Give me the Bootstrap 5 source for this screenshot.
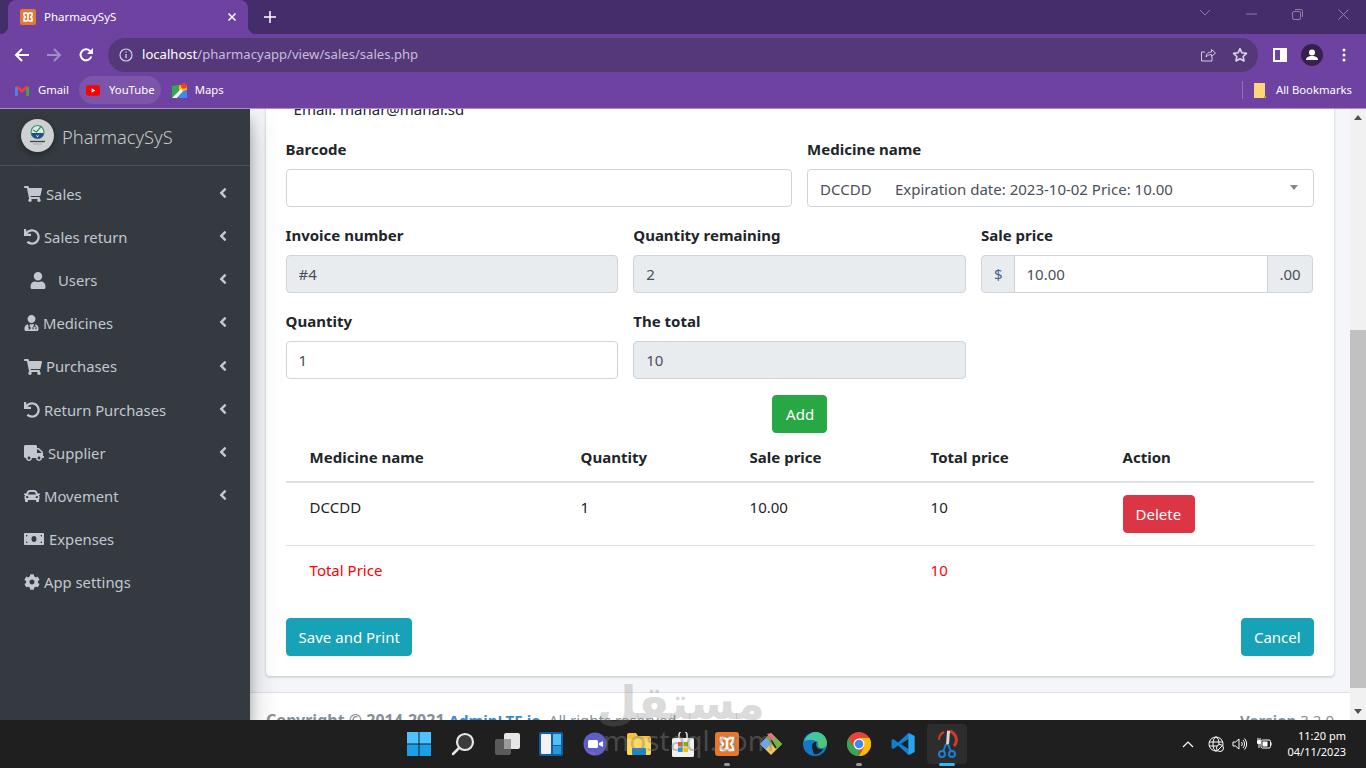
<!DOCTYPE html>
<html lang="en">
<head>
  <meta charset="UTF-8">
  <title>PharmacySyS</title>
  <link href="https://cdn.jsdelivr.net/npm/bootstrap@5.3.3/dist/css/bootstrap.min.css" rel="stylesheet">
  <style>
    html, body { height: 100%; overflow: hidden; }
    body { font-family: "Noto Sans", "Liberation Sans", sans-serif; font-size: 15px; color: #212529; }
    .screen { height: 768px; width: 1366px; }

    /* browser chrome */
    .tabstrip { height: 34px; background: #452c6a; }
    .tabitem { position: relative; width: 240px; margin-left: 8px; background: #6e42a0; border-radius: 8px 8px 0 0; color: #fff; font-size: 11.5px; padding: 0 11px 0 12px; }
    .tabitem::before, .tabitem::after { content: ""; position: absolute; bottom: 0; width: 8px; height: 8px; }
    .tabitem::before { left: -8px; background: radial-gradient(circle at 0 0, transparent 8px, #6e42a0 8.5px); }
    .tabitem::after { right: -8px; background: radial-gradient(circle at 100% 0, transparent 8px, #6e42a0 8.5px); }
    .newtab { width: 22px; margin-left: 11px; }
    .wingroup { padding-bottom: 6px; }
    .winctl { width: 46px; }
    .toolrow { height: 38px; background: #6e42a0; padding-top: 4px; }
    .toolbtn { width: 32px; }
    .firstbtn { margin-left: 6px; }
    .omnibox { width: 1150px; height: 34px; margin-left: 6px; margin-right: 6px; background: #54387a; border-radius: 17px; font-size: 13.1px; color: #c9bcdb; padding: 0 10px 0 11px; }
    .omnibox b { font-weight: 400; color: #fff; }
    .infoicon { margin-right: 9px; }
    .staricon { margin-left: 16px; }
    .markrow { height: 37px; background: #6e42a0; border-bottom: 1px solid #a88dca; color: #fff; font-size: 11.3px; padding: 0 14px 0 15px; }
    .markitem { height: 28px; }
    .markpill { background: #7c55ab; border-radius: 14px; padding: 0 6px 0 7px; margin: 0 11px 0 10px; }
    .markicon { margin-right: 9px; }
    .mapicon { margin-right: 8px; }
    .markdivider { width: 1px; height: 18px; background: #9070b8; margin-right: 11px; }
    .foldericon { margin-right: 10px; }

    /* admin page */
    .pagearea { height: 611px; overflow: hidden; }
    .sidepanel { width: 250px; background: #343a40; color: #c2c7d0; box-shadow: 0 14px 28px rgba(0,0,0,.25), 0 10px 10px rgba(0,0,0,.22); z-index: 2; }
    .brandrow { height: 57px; border-bottom: 1px solid #4b545c; padding-left: 21px; font-size: 18.3px; font-weight: 300; color: rgba(255,255,255,.72); }
    .brandlogo { margin: -3px 8px 0 0; filter: drop-shadow(0 2px 3px rgba(0,0,0,.35)); }
    .menulist { padding-top: 6.2px; }
    .menuitem { height: 43.2px; padding: 0 23px 0 24px; color: #c2c7d0; font-size: 14.8px; text-decoration: none; }
    .menuitem svg { fill: #c2c7d0; height: 16px; flex: none; margin-right: 4px; }
    .menuitem .arrowicon { margin: -2px 0 0 auto; height: 16px; width: 8px; }
    .menuitem .usericon { margin: 0 12px 0 6px; height: 17px; }
    .menuitem .moneyicon { margin-right: 5px; }
    .contentcol { width: 1100px; background: #f4f6f9; }
    .contentinner { margin-top: -31px; padding: 0 16.4px 16px 15.6px; }
    .formcard { border: 0; border-radius: 4px; box-shadow: 0 0 1px rgba(0,0,0,.125), 0 1px 3px rgba(0,0,0,.2); }
    .formcard .card-body { padding: 20px; }
    .emailline { line-height: 24px; padding-left: 8px; margin-top: -1px; margin-bottom: 16px; font-size: 15px; }
    .formcard .row { --bs-gutter-x: 15px; }
    .fieldbox { margin-bottom: 16px; }
    .fieldbox label { font-weight: 700; margin-bottom: 8px; line-height: 24px; display: block; font-size: 15px; }
    .formcard .form-control, .formcard .form-select, .formcard .input-group-text { border-color: #ced4da; color: #495057; font-size: 15px; line-height: 24px; border-radius: 4px; }
    .formcard .form-control[readonly] { background: #e9ecef; }
    .pricegroup { width: calc(100% - 1px); }
    .formcard .pricegroup > .form-control { border-radius: 0; background: #fff; }
    .formcard .pricegroup > .input-group-text { background: #e9ecef; }
    .formcard .pricegroup > .input-group-text:first-child { border-radius: 4px 0 0 4px; padding: 6px 11px 6px 12px; color: #4a6394; }
    .formcard .pricegroup > .input-group-text:last-child { border-radius: 0 4px 4px 0; padding: 6px 11px; }
    .selectwrap { position: relative; }
    .selectwrap .form-select { background-image: none; padding: 7px 30px 5px 12px; }
    .selectwrap::after { content: ""; position: absolute; right: 16px; top: 16px; border-style: solid; border-width: 5px 4px 0 4px; border-color: #888 transparent transparent transparent; }
    .actionbtn { font-size: 15px; line-height: 24px; padding: 6px 12px; border-radius: 4px; color: #fff; border: 1px solid; }
    .btngreen { background: #28a745; border-color: #28a745; padding-left: 13px; }
    .btnred { background: #dc3545; border-color: #dc3545; padding-right: 13px; }
    .btnteal { background: #17a2b8; border-color: #17a2b8; }
    .savebtn { padding-right: 11px; }
    .medtable { table-layout: fixed; margin-bottom: 24px; font-size: 15px; }
    .medtable th, .medtable td { padding: 12px 24px; line-height: 24px; vertical-align: top; }
    .medtable thead th { border-bottom: 2px solid #dee2e6; }
    .medtable tbody td { border-bottom: 1px solid #dee2e6; }
    .medtable tbody tr:last-child td { border-bottom: 0; color: #f00; }
    .colname { width: 271px; } .colqty { width: 169px; } .colsale { width: 181px; } .coltotal { width: 192px; }
    .pagefooter { height: 60px; background: #fff; border-top: 1px solid #dee2e6; padding: 15px 16px; color: #869099; font-size: 15px; line-height: 24px; }
    .pagefooter b { font-weight: 700; }
    .pagefooter .copyspan { font-size: 16px; }
    .pagefooter a { color: #3a8ad0; font-weight: 700; text-decoration: none; }
    .scrolltrack { width: 16px; background: #f1f1f1; }
    .scrollarrow { height: 17px; }
    .scrollgap { height: 204px; }
    .scrollthumb { height: 358px; background: #c1c1c1; }

    /* taskbar */
    .taskbar { height: 48px; background: #1f1f1f; color: #fff; position: relative; z-index: 3; }
    .taskicons { position: absolute; left: 397px; top: 0; height: 48px; }
    .taskslot { position: relative; width: 44px; height: 48px; }
    .taskslot.activeslot::before { content: ""; position: absolute; left: 2px; top: 4px; width: 40px; height: 40px; background: #2d2d2d; border-radius: 4px; }
    .taskslot svg { position: relative; }
    .taskslot .rundot { position: absolute; bottom: 2px; left: 19px; width: 6px; height: 3px; border-radius: 2px; background: #9a9a9a; }
    .taskslot .rundot.bluedot { left: 14px; width: 16px; background: #3cb6f4; }
    .trayzone { font-size: 11px; padding-right: 20px; }
    .trayicon { margin-right: 8px; }
    .traycaret { margin-right: 14px; }
    .trayclock { text-align: right; line-height: 16px; margin-left: 15px; }
    .watermark { position: absolute; left: 603px; top: 672px; width: 162px; text-align: center; color: rgba(128,128,128,.3); z-index: 4; pointer-events: none; }
    .watermark .wmarabic { font-family: "DejaVu Sans", sans-serif; font-weight: 700; font-size: 46px; line-height: 62px; }
    .watermark .wmlatin { font-family: "Noto Sans", sans-serif; font-size: 28px; line-height: 28px; margin-top: -8px; color: rgba(128,128,128,.45); }
  </style>
</head>
<body>
  <svg width="0" height="0" class="position-absolute">
    <symbol id="ic-cart" viewBox="0 0 576 512"><path d="M528.12 301.319l47.273-208C578.806 78.301 567.391 64 551.99 64H159.208l-9.166-44.81C147.758 8.021 137.93 0 126.529 0H24C10.745 0 0 10.745 0 24v16c0 13.255 10.745 24 24 24h69.883l70.248 343.435C147.325 417.1 136 435.222 136 456c0 30.928 25.072 56 56 56s56-25.072 56-56c0-15.674-6.447-29.835-16.824-40h209.647C430.447 426.165 424 440.326 424 456c0 30.928 25.072 56 56 56s56-25.072 56-56c0-22.172-12.888-41.332-31.579-50.405l5.517-24.276c3.413-15.018-8.002-29.319-23.403-29.319H218.117l-6.545-32h293.145c11.206 0 20.92-7.754 23.403-18.681z"/></symbol>
    <symbol id="ic-undo" viewBox="0 0 512 512"><path d="M212.333 224.333H12c-6.627 0-12-5.373-12-12V12C0 5.373 5.373 0 12 0h48c6.627 0 12 5.373 12 12v78.112C117.773 39.279 184.26 7.47 258.175 8.007c136.906.994 246.448 111.623 246.157 248.532C504.041 393.258 393.12 504 256.333 504c-64.089 0-122.496-24.313-166.51-64.215-5.099-4.622-5.334-12.554-.467-17.42l33.967-33.967c4.474-4.474 11.662-4.717 16.401-.525C170.76 415.336 211.58 432 256.333 432c97.268 0 176-78.716 176-176 0-97.267-78.716-176-176-176-58.496 0-110.28 28.476-142.274 72.333h98.274c6.627 0 12 5.373 12 12v48c0 6.627-5.373 12-12 12z"/></symbol>
    <symbol id="ic-user" viewBox="0 0 448 512"><path d="M224 256c70.7 0 128-57.3 128-128S294.7 0 224 0 96 57.3 96 128s57.3 128 128 128zm89.6 32h-16.7c-22.2 10.2-46.9 16-72.9 16s-50.6-5.8-72.9-16h-16.7C60.2 288 0 348.2 0 422.4V464c0 26.5 21.5 48 48 48h352c26.5 0 48-21.5 48-48v-41.6c0-74.2-60.2-134.4-134.4-134.4z"/></symbol>
    <symbol id="ic-doctor" viewBox="0 0 448 512"><path d="M224 256c70.7 0 128-57.3 128-128S294.7 0 224 0 96 57.3 96 128s57.3 128 128 128zM104 296C46 310 0 360 0 422v42c0 26 22 48 48 48h352c26 0 48-22 48-48v-42c0-62-46-112-104-126v60c24 8 40 28 40 52v36c0 8-6 14-14 14h-30v-28h16v-22c0-18-18-32-36-32s-36 14-36 32v22h16v28h-30c-8 0-14-6-14-14v-36c0-24 16-44 40-52v-64c-6-1-30 10-64 10s-58-11-64-10v80c20 6 32 22 32 42 0 26-22 48-48 48s-48-22-48-48c0-20 12-36 32-42zM120 400a22 22 0 1 0 .1 0z"/></symbol>
    <symbol id="ic-arrow" viewBox="0 0 256 512"><path d="M31.7 239l136-136c9.4-9.4 24.6-9.4 33.9 0l22.6 22.6c9.4 9.4 9.4 24.6 0 33.9L127.9 256l96.4 96.4c9.4 9.4 9.4 24.6 0 33.9L201.7 409c-9.4 9.4-24.6 9.4-33.9 0l-136-136c-9.5-9.4-9.5-24.6-.1-34z"/></symbol>
    <symbol id="ic-truck" viewBox="0 0 640 512"><path d="M624 352h-16V243.9c0-12.7-5.1-24.9-14.1-33.9L494 110.1c-9-9-21.2-14.1-33.9-14.1H416V48c0-26.5-21.5-48-48-48H48C21.5 0 0 21.5 0 48v320c0 26.5 21.5 48 48 48h16c0 53 43 96 96 96s96-43 96-96h128c0 53 43 96 96 96s96-43 96-96h48c8.8 0 16-7.2 16-16v-32c0-8.8-7.2-16-16-16zM160 464c-26.5 0-48-21.5-48-48s21.5-48 48-48 48 21.5 48 48-21.5 48-48 48zm320 0c-26.5 0-48-21.5-48-48s21.5-48 48-48 48 21.5 48 48-21.5 48-48 48zm80-208H416V144h44.1l99.9 99.9V256z"/></symbol>
    <symbol id="ic-car" viewBox="0 0 512 512"><path d="M499.99 176h-59.87l-16.64-41.6C406.38 91.63 365.57 64 319.5 64h-127c-46.06 0-86.88 27.63-103.99 70.4L71.87 176H12.01C4.2 176-1.53 183.34.37 190.91l6 24C7.7 220.25 12.5 224 18.01 224h20.07C24.65 235.73 16 252.78 16 272v48c0 16.12 6.16 30.67 16 41.93V416c0 17.67 14.33 32 32 32h32c17.67 0 32-14.33 32-32v-32h256v32c0 17.67 14.33 32 32 32h32c17.67 0 32-14.33 32-32v-54.07c9.84-11.25 16-25.8 16-41.93v-48c0-19.22-8.65-36.27-22.07-48H494c5.51 0 10.31-3.75 11.64-9.09l6-24c1.89-7.57-3.84-14.91-11.65-14.91zm-352.06-17.83c7.29-18.22 24.94-30.17 44.57-30.17h127c19.63 0 37.28 11.95 44.57 30.17L384 208H128l19.93-49.83zM96 319.8c-19.2 0-32-12.76-32-31.9S76.8 256 96 256s48 28.71 48 47.85-28.8 15.95-48 15.95zm320 0c-19.2 0-48 3.19-48-15.95S396.8 256 416 256s32 12.76 32 31.9-12.8 31.9-32 31.9z"/></symbol>
    <symbol id="ic-money" viewBox="0 0 640 512"><path fill-rule="evenodd" d="M32 64h576c18 0 32 14 32 32v320c0 18-14 32-32 32H32c-18 0-32-14-32-32V96c0-18 14-32 32-32zM64 128v48c35 0 48-20 48-48zm464 0c0 28 13 48 48 48v-48zM64 336v48h48c0-28-13-48-48-48zm512 0c-35 0-48 20-48 48h48zM320 160c-48 0-80 42-80 96s32 96 80 96 80-42 80-96-32-96-80-96z"/></symbol>
    <symbol id="ic-cog" viewBox="0 0 512 512"><path d="M487.4 315.7l-42.6-24.6c4.3-23.2 4.3-47 0-70.2l42.6-24.6c4.9-2.8 7.1-8.6 5.5-14-11.1-35.6-30-67.8-54.7-94.6-3.8-4.1-10-5.1-14.8-2.3L380.8 110c-17.9-15.4-38.5-27.3-60.8-35.1V25.8c0-5.6-3.9-10.5-9.4-11.7-36.7-8.2-74.3-7.8-109.2 0-5.5 1.2-9.4 6.1-9.4 11.7V75c-22.2 7.9-42.8 19.8-60.8 35.1L88.7 85.5c-4.9-2.8-11-1.9-14.8 2.3-24.7 26.7-43.6 58.9-54.7 94.6-1.7 5.4.6 11.2 5.5 14L67.3 221c-4.3 23.2-4.3 47 0 70.2l-42.6 24.6c-4.9 2.8-7.1 8.6-5.5 14 11.1 35.6 30 67.8 54.7 94.6 3.8 4.1 10 5.1 14.8 2.3l42.6-24.6c17.9 15.4 38.5 27.3 60.8 35.1v49.2c0 5.6 3.9 10.5 9.4 11.7 36.7 8.2 74.3 7.8 109.2 0 5.5-1.2 9.4-6.1 9.4-11.7v-49.2c22.2-7.9 42.8-19.8 60.8-35.1l42.6 24.6c4.9 2.8 11 1.9 14.8-2.3 24.7-26.7 43.6-58.9 54.7-94.6 1.5-5.5-.7-11.3-5.6-14.1zM256 336c-44.1 0-80-35.9-80-80s35.9-80 80-80 80 35.9 80 80-35.9 80-80 80z"/></symbol>
    <symbol id="ic-xampp" viewBox="0 0 24 24"><rect width="24" height="24" rx="3" fill="#e8772e"/><path d="M12 8L10 6H6V10L8 12L6 14V18H10L12 16L14 18H18V14L16 12L18 10V6H14ZV16" fill="none" stroke="#fff" stroke-width="2.600" stroke-linejoin="round"/></symbol>
  </svg>

  <div class="screen d-flex flex-column">
    <div class="tabstrip d-flex align-items-center">
      <div class="tabitem d-flex align-items-center h-100">
        <svg width="16" height="16" class="me-2"><use href="#ic-xampp"/></svg>
        <span>PharmacySyS</span>
        <svg width="10" height="10" viewBox="0 0 10 10" class="ms-auto"><path d="M1.500 1.500l7 7M8.500 1.500l-7 7" stroke="#fff" stroke-width="1.500"/></svg>
      </div>
      <div class="newtab d-flex justify-content-center">
        <svg width="12" height="12" viewBox="0 0 12 12"><path d="M6 0v12M0 6h12" stroke="#fff" stroke-width="1.500"/></svg>
      </div>
      <div class="ms-auto d-flex wingroup">
        <div class="winctl d-flex justify-content-center"><svg width="12" height="8" viewBox="0 0 12 8"><path d="M1 1l5 5 5-5" fill="none" stroke="#8d7ea8"/></svg></div>
        <div class="winctl d-flex justify-content-center align-items-center"><svg width="11" height="2"><path d="M0 1h11" stroke="#8d7ea8"/></svg></div>
        <div class="winctl d-flex justify-content-center"><svg width="11" height="11" viewBox="0 0 11 11"><rect x=".5" y="2.500" width="8" height="8" rx="1.500" fill="none" stroke="#8d7ea8"/><path d="M3 .5h6a1.500 1.500 0 0 1 1.500 1.500v6" fill="none" stroke="#8d7ea8"/></svg></div>
        <div class="winctl d-flex justify-content-center"><svg width="11" height="11" viewBox="0 0 11 11"><path d="M.5.5l10 10M10.500.5l-10 10" stroke="#8d7ea8"/></svg></div>
      </div>
    </div>

    <div class="toolrow d-flex align-items-center">
      <div class="toolbtn firstbtn d-flex justify-content-center"><svg width="16" height="16" viewBox="0 0 16 16"><path d="M15 8H2M8 2L2 8l6 6" fill="none" stroke="#fff" stroke-width="2"/></svg></div>
      <div class="toolbtn d-flex justify-content-center"><svg width="16" height="16" viewBox="0 0 16 16"><path d="M1 8h13M8 2l6 6-6 6" fill="none" stroke="#a48dc4" stroke-width="2"/></svg></div>
      <div class="toolbtn d-flex justify-content-center"><svg width="16" height="16" viewBox="0 0 16 16"><path d="M13.300 9.500A5.500 5.500 0 1 1 12 4L14 6" fill="none" stroke="#fff" stroke-width="2"/><path d="M15 1v6H9z" fill="#fff"/></svg></div>
      <div class="omnibox d-flex align-items-center">
        <svg width="14" height="14" viewBox="0 0 14 14" class="infoicon"><circle cx="7" cy="7" r="6" fill="none" stroke="#d9d0e6" stroke-width="1.200"/><path d="M7 6v4.200M7 3.500v1.300" stroke="#d9d0e6" stroke-width="1.300"/></svg>
        <span><b>localhost</b>/pharmacyapp/view/sales/sales.php</span>
        <svg width="16" height="16" viewBox="0 0 16 16" class="ms-auto"><path d="M12 9.500V14H1.500V5H5M6 10c0-3 2-5 5.500-5V2.500L15.500 6l-4 3.500V7.500C9 7.500 7.500 8.500 6 10z" fill="none" stroke="#d3c9e0" stroke-width="1"/></svg>
        <svg width="16" height="16" viewBox="0 0 24 24" class="staricon"><path d="M12 2.500l2.900 6.200 6.800.800-5 4.700 1.300 6.700-6-3.300-6 3.300 1.300-6.700-5-4.700 6.800-.8z" fill="none" stroke="#ddd5e8" stroke-width="2.400" stroke-linejoin="round"/></svg>
      </div>
      <div class="toolbtn d-flex justify-content-center"><svg width="14" height="14" viewBox="0 0 14 14"><rect x="1" y="1" width="12" height="12" fill="none" stroke="#fff" stroke-width="2"/><rect x="7" y="1" width="6" height="12" fill="#fff"/></svg></div>
      <div class="toolbtn d-flex justify-content-center"><svg width="22" height="22" viewBox="0 0 22 22"><circle cx="11" cy="11" r="11" fill="#35204f"/><circle cx="11" cy="8.500" r="3" fill="#fff"/><path d="M5 16c0-3 3-4 6-4s6 1 6 4z" fill="#fff"/></svg></div>
      <div class="toolbtn d-flex justify-content-center"><svg width="4" height="14" viewBox="0 0 4 14"><circle cx="2" cy="2" r="1.500" fill="#fff"/><circle cx="2" cy="7" r="1.500" fill="#fff"/><circle cx="2" cy="12" r="1.500" fill="#fff"/></svg></div>
    </div>

    <div class="markrow d-flex align-items-center">
      <div class="markitem d-flex align-items-center">
        <svg width="14" height="11" viewBox="0 0 15 11" class="markicon"><path d="M0 1.500V11h3V4.500l4.500 3.300L12 4.500V11h3V1.500L12.500.5 7.500 4.200 2.500.5z" fill="#ea4335"/><path d="M0 1.500V11h3V3.500z" fill="#4285f4"/><path d="M12 3.500V11h3V1.500z" fill="#34a853"/></svg>
        <span>Gmail</span>
      </div>
      <div class="markitem markpill d-flex align-items-center">
        <svg width="14" height="11" viewBox="0 0 15 11" class="markicon"><rect width="15" height="11" rx="2.500" fill="#f00"/><path d="M6 3l4 2.500L6 8z" fill="#fff"/></svg>
        <span>YouTube</span>
      </div>
      <div class="markitem d-flex align-items-center">
        <svg width="15" height="15" viewBox="0 0 15 15" class="mapicon"><path d="M0 3l7-1v12l-7 1z" fill="#34a853"/><path d="M7 2l8 1v4L7 10z" fill="#fbbc04"/><path d="M7 10l8-3v8H7z" fill="#4285f4"/><path d="M0 15L9 6l2 2-6 7z" fill="#f4f4f4"/><circle cx="12" cy="3" r="2.800" fill="#ea4335"/></svg>
        <span>Maps</span>
      </div>
      <div class="markdivider ms-auto"></div>
      <div class="markitem d-flex align-items-center">
        <svg width="12" height="15" viewBox="0 0 12 15" class="foldericon"><path d="M0 0h11v13l1 2H0z" fill="#fcd479"/><path d="M10 13h2v2h-2z" fill="#d99d2b"/></svg>
        <span>All Bookmarks</span>
      </div>
    </div>

    <div class="pagearea d-flex">
      <aside class="sidepanel flex-shrink-0">
        <div class="brandrow d-flex align-items-center">
          <svg width="33" height="33" viewBox="0 0 33 33" class="brandlogo"><circle cx="16.500" cy="16.500" r="16.500" fill="#cfd0d1"/><circle cx="16.500" cy="13" r="6.500" fill="#e4e6e6" stroke="#2f9a6a" stroke-width="1.200"/><path d="M10.500 14h12c0 3.500-2.500 5.500-6 5.500s-6-2-6-5.500z" fill="#1f4f8e"/><path d="M12 11l3.500 2 5-6" fill="none" stroke="#2f9a55" stroke-width="1.300"/><path d="M14.500 15.500l2 1.500 2-1.500-2 3z" fill="#e4e6e6"/><path d="M9 22.500h15" stroke="#444" stroke-width="1.300"/><path d="M12 25h9" stroke="#999" stroke-width=".7"/></svg>
          <span>PharmacySyS</span>
        </div>
        <ul class="nav flex-column menulist">
          <li class="nav-item"><a class="menuitem d-flex align-items-center" href="#"><svg width="18"><use href="#ic-cart"/></svg>Sales<svg class="arrowicon"><use href="#ic-arrow"/></svg></a></li>
          <li class="nav-item"><a class="menuitem d-flex align-items-center" href="#"><svg width="16"><use href="#ic-undo"/></svg>Sales return<svg class="arrowicon"><use href="#ic-arrow"/></svg></a></li>
          <li class="nav-item"><a class="menuitem d-flex align-items-center" href="#"><svg width="16" class="usericon"><use href="#ic-user"/></svg>Users<svg class="arrowicon"><use href="#ic-arrow"/></svg></a></li>
          <li class="nav-item"><a class="menuitem d-flex align-items-center" href="#"><svg width="15"><use href="#ic-doctor"/></svg>Medicines<svg class="arrowicon"><use href="#ic-arrow"/></svg></a></li>
          <li class="nav-item"><a class="menuitem d-flex align-items-center" href="#"><svg width="18"><use href="#ic-cart"/></svg>Purchases<svg class="arrowicon"><use href="#ic-arrow"/></svg></a></li>
          <li class="nav-item"><a class="menuitem d-flex align-items-center" href="#"><svg width="16"><use href="#ic-undo"/></svg>Return Purchases<svg class="arrowicon"><use href="#ic-arrow"/></svg></a></li>
          <li class="nav-item"><a class="menuitem d-flex align-items-center" href="#"><svg width="20"><use href="#ic-truck"/></svg>Supplier<svg class="arrowicon"><use href="#ic-arrow"/></svg></a></li>
          <li class="nav-item"><a class="menuitem d-flex align-items-center" href="#"><svg width="16"><use href="#ic-car"/></svg>Movement<svg class="arrowicon"><use href="#ic-arrow"/></svg></a></li>
          <li class="nav-item"><a class="menuitem d-flex align-items-center" href="#"><svg width="20" class="moneyicon"><use href="#ic-money"/></svg>Expenses</a></li>
          <li class="nav-item"><a class="menuitem d-flex align-items-center" href="#"><svg width="16"><use href="#ic-cog"/></svg>App settings</a></li>
        </ul>
      </aside>

      <div class="contentcol flex-shrink-0">
        <div class="contentinner">
          <div class="card formcard">
            <div class="card-body">
              <div class="emailline">Email: manar@manar.sd</div>
              <div class="row">
                <div class="col-6 fieldbox">
                  <label>Barcode</label>
                  <input type="text" class="form-control">
                </div>
                <div class="col-6 fieldbox">
                  <label>Medicine name</label>
                  <div class="selectwrap">
                    <select class="form-select"><option>DCCDD&nbsp;&nbsp;&nbsp;&nbsp;&nbsp;&nbsp;Expiration date: 2023-10-02 Price: 10.00</option></select>
                  </div>
                </div>
              </div>
              <div class="row">
                <div class="col-4 fieldbox">
                  <label>Invoice number</label>
                  <input type="text" class="form-control" value="#4" readonly>
                </div>
                <div class="col-4 fieldbox">
                  <label>Quantity remaining</label>
                  <input type="text" class="form-control" value="2" readonly>
                </div>
                <div class="col-4 fieldbox">
                  <label>Sale price</label>
                  <div class="input-group pricegroup">
                    <span class="input-group-text">$</span>
                    <input type="text" class="form-control" value="10.00">
                    <span class="input-group-text">.00</span>
                  </div>
                </div>
              </div>
              <div class="row">
                <div class="col-4 fieldbox">
                  <label>Quantity</label>
                  <input type="text" class="form-control" value="1">
                </div>
                <div class="col-4 fieldbox">
                  <label>The total</label>
                  <input type="text" class="form-control" value="10" readonly>
                </div>
              </div>
              <div class="text-center">
                <button class="actionbtn btngreen">Add</button>
              </div>
              <table class="table medtable">
                <colgroup><col class="colname"><col class="colqty"><col class="colsale"><col class="coltotal"><col></colgroup>
                <thead>
                  <tr><th>Medicine name</th><th>Quantity</th><th>Sale price</th><th>Total price</th><th>Action</th></tr>
                </thead>
                <tbody>
                  <tr><td>DCCDD</td><td>1</td><td>10.00</td><td>10</td><td><button class="actionbtn btnred">Delete</button></td></tr>
                  <tr><td>Total Price</td><td></td><td></td><td>10</td><td></td></tr>
                </tbody>
              </table>
              <div class="d-flex justify-content-between">
                <button class="actionbtn btnteal savebtn">Save and Print</button>
                <button class="actionbtn btnteal">Cancel</button>
              </div>
            </div>
          </div>
        </div>
        <footer class="pagefooter d-flex justify-content-between">
          <div><b class="copyspan">Copyright © 2014-2021 </b><b><a href="#">AdminLTE.io</a>.</b> All rights reserved.</div>
          <div><b>Version</b> 3.2.0</div>
        </footer>
      </div>

      <div class="scrolltrack d-flex flex-column flex-shrink-0">
        <div class="scrollarrow d-flex align-items-center justify-content-center"><svg width="8" height="5" viewBox="0 0 8 5"><path d="M4 0l4 5H0z" fill="#505050"/></svg></div>
        <div class="scrollgap"></div>
        <div class="scrollthumb"></div>
        <div class="flex-grow-1"></div>
        <div class="scrollarrow d-flex align-items-center justify-content-center"><svg width="8" height="5" viewBox="0 0 8 5"><path d="M4 5l4-5H0z" fill="#505050"/></svg></div>
      </div>
    </div>

    <div class="taskbar d-flex align-items-center">
      <div class="taskicons d-flex">
        <div class="taskslot d-flex align-items-center justify-content-center"><svg width="24" height="24" viewBox="0 0 24 24"><rect width="11.500" height="11.500" fill="#4cc2ff"/><rect x="12.500" width="11.500" height="11.500" fill="#4cc2ff"/><rect y="12.500" width="11.500" height="11.500" fill="#1a9fe8"/><rect x="12.500" y="12.500" width="11.500" height="11.500" fill="#1a9fe8"/></svg></div>
        <div class="taskslot d-flex align-items-center justify-content-center"><svg width="24" height="24" viewBox="0 0 24 24"><circle cx="14" cy="10" r="8" fill="#3c3c3c" stroke="#e8e8e8" stroke-width="2.200"/><path d="M8 16l-6 6" stroke="#e8e8e8" stroke-width="2.500" stroke-linecap="round"/></svg></div>
        <div class="taskslot d-flex align-items-center justify-content-center"><svg width="25" height="22" viewBox="0 0 25 22"><rect y="6" width="16" height="16" rx="2" fill="#5a5a5a"/><rect x="9" width="16" height="16" rx="2" fill="#e6e6e6"/><rect x="9" y="6" width="7" height="10" fill="#9a9a9a"/></svg></div>
        <div class="taskslot d-flex align-items-center justify-content-center"><svg width="24" height="24" viewBox="0 0 24 24"><rect width="24" height="24" rx="2" fill="#0f5fa8"/><rect x="2" y="2" width="10" height="20" rx="1" fill="#f2f2f2"/><rect x="14" y="2" width="8" height="11" fill="#54c0f0"/><rect x="14" y="14" width="8" height="8" fill="#2c96d8"/></svg></div>
        <div class="taskslot d-flex align-items-center justify-content-center"><svg width="24" height="24" viewBox="0 0 24 24"><circle cx="12" cy="12" r="11.500" fill="#5b5fc7"/><path d="M1 12A11 11 0 0 0 12 23v-3H6z" fill="#7b60c8"/><rect x="5" y="8" width="10" height="8" rx="1.500" fill="#fff"/><path d="M16 11l4-2v6l-4-2z" fill="#fff"/></svg></div>
        <div class="taskslot d-flex align-items-center justify-content-center"><svg width="24" height="22" viewBox="0 0 24 22"><path d="M0 2a2 2 0 0 1 2-2h7l2 3h11a2 2 0 0 1 2 2v15a2 2 0 0 1-2 2H2a2 2 0 0 1-2-2z" fill="#f5c33b"/><path d="M0 6h24v14a2 2 0 0 1-2 2H2a2 2 0 0 1-2-2z" fill="#fbd960"/><rect x="5" y="15" width="14" height="7" rx="1" fill="#1a82c8"/></svg></div>
        <div class="taskslot d-flex align-items-center justify-content-center"><svg width="22" height="25" viewBox="0 0 22 25"><path d="M7 6V3a4 4 0 0 1 8 0v3" fill="none" stroke="#e6e6e6" stroke-width="1.500"/><rect y="6" width="22" height="19" rx="1.500" fill="#f0f0f0"/><rect x="6" y="10" width="4.500" height="4.500" fill="#e8502f"/><rect x="11.500" y="10" width="4.500" height="4.500" fill="#7ab800"/><rect x="6" y="15.500" width="4.500" height="4.500" fill="#00a4ef"/><rect x="11.500" y="15.500" width="4.500" height="4.500" fill="#ffb900"/></svg></div>
        <div class="taskslot d-flex align-items-center justify-content-center"><svg width="24" height="24"><use href="#ic-xampp"/></svg><span class="rundot"></span></div>
        <div class="taskslot d-flex align-items-center justify-content-center"><svg width="24" height="24" viewBox="0 0 24 24"><path d="M12 1l11 11-11 11L1 12z" fill="#f7c35c"/><path d="M12 1l11 11-5.500 5.500L6.500 6.500z" fill="#73b34c"/><path d="M1 12l5.500-5.500L12 12l-5.500 5.500z" fill="#69a7ef"/><path d="M8 2l4-1 4 5-3 3z" fill="#e9708b"/><path d="M12 8l5 8" stroke="#222" stroke-width="1.500"/></svg></div>
        <div class="taskslot d-flex align-items-center justify-content-center"><svg width="24" height="24" viewBox="0 0 24 24"><defs><linearGradient id="edgegrad" x1="0" y1="0" x2="1" y2="1"><stop offset="0" stop-color="#37c6d0"/><stop offset="1" stop-color="#56c65a"/></linearGradient></defs><circle cx="12" cy="12" r="12" fill="#1479c4"/><path d="M1 10C3 3 9 0 13 0c6 0 11 5 11 11 0 3-2 5-5 5-4 0-4-2-4-3 0-3-3-5-7-5-3 0-6 0-7 2z" fill="url(#edgegrad)"/><path d="M9 14c0-3 3-5 6-4-4 0-2 9 5 7-2 4-6 6-9 5 -1-3-2-5-2-8z" fill="#1f1f1f"/></svg></div>
        <div class="taskslot d-flex align-items-center justify-content-center"><svg width="24" height="24" viewBox="0 0 24 24"><circle cx="12" cy="12" r="12" fill="#ea4335"/><path d="M12 12L1.600 18A12 12 0 0 0 12 24z" fill="#34a853"/><path d="M12 12l-10.400 6A12 12 0 0 1 1.600 6L6.800 15z" fill="#34a853"/><path d="M12 6h10.400A12 12 0 0 1 12 24l5.200-9z" fill="#fbbc04"/><circle cx="12" cy="12" r="5.500" fill="#fff"/><circle cx="12" cy="12" r="4.300" fill="#4285f4"/></svg><span class="rundot"></span></div>
        <div class="taskslot d-flex align-items-center justify-content-center"><svg width="24" height="24" viewBox="0 0 24 24"><path d="M17.500 1L23.500 4v16L17.500 23 7 13.500 2.500 17 .5 16V8l2-1L7 10.500z" fill="#0f7ed1"/><path d="M17.500 7v10L10 12z" fill="#1f1f1f"/><path d="M17.500 1L23.500 4v16L17.500 23z" fill="#2aa3ee"/></svg></div>
        <div class="taskslot activeslot d-flex align-items-center justify-content-center"><svg width="22" height="28" viewBox="0 0 22 28"><path d="M11 1a9 9 0 0 1 7 15" fill="none" stroke="#d13b2a" stroke-width="3"/><path d="M8 2a9 9 0 0 0-5 8" fill="none" stroke="#d13b2a" stroke-width="2"/><path d="M11 1l3 0-1 14-3 0z" fill="#d8d8d8"/><path d="M10 14l-3 8M12 14l3 8" stroke="#1b7fd4" stroke-width="2"/><circle cx="6" cy="24" r="3" fill="none" stroke="#1b7fd4" stroke-width="2"/><circle cx="16" cy="24" r="3" fill="none" stroke="#1b7fd4" stroke-width="2"/></svg><span class="rundot bluedot"></span></div>
      </div>
      <div class="trayzone ms-auto d-flex align-items-center">
        <svg width="12" height="7" viewBox="0 0 12 7" class="traycaret"><path d="M1 6l5-5 5 5" fill="none" stroke="#fff" stroke-width="1.200"/></svg>
        <svg width="16" height="16" viewBox="0 0 16 16" class="trayicon"><circle cx="8" cy="8" r="7" fill="none" stroke="#fff"/><ellipse cx="8" cy="8" rx="3" ry="7" fill="none" stroke="#fff"/><path d="M1 6h14M1 10h14" stroke="#fff"/><circle cx="12" cy="12" r="3.500" fill="#1f1f1f" stroke="#fff"/><path d="M10 14l4-4" stroke="#fff"/></svg>
        <svg width="16" height="16" viewBox="0 0 16 16" class="trayicon"><path d="M1 6v4h2.500L7 13V3L3.500 6z" fill="none" stroke="#fff"/><path d="M9.500 6a3 3 0 0 1 0 4M11 4a6 6 0 0 1 0 8M12.500 2.500a8 8 0 0 1 0 11" fill="none" stroke="#fff"/></svg>
        <svg width="16" height="14" viewBox="0 0 16 14"><rect x="5" y="3" width="9.500" height="8" rx="1.500" fill="none" stroke="#fff"/><rect x="6.500" y="4.500" width="5" height="5" fill="#fff"/><path d="M15 5.500v3" stroke="#fff"/><rect x="1" y="3" width="4" height="4" rx="1" fill="#fff"/><path d="M2 1v2M4 1v2M3 7v4" stroke="#fff"/></svg>
        <div class="trayclock"><div>11:20 pm</div><div>04/11/2023</div></div>
      </div>
    </div>
  </div>

  <div class="watermark">
    <div class="wmarabic" dir="rtl" lang="ar">مستقل</div>
    <div class="wmlatin">mostaql.com</div>
  </div>
</body>
</html>
